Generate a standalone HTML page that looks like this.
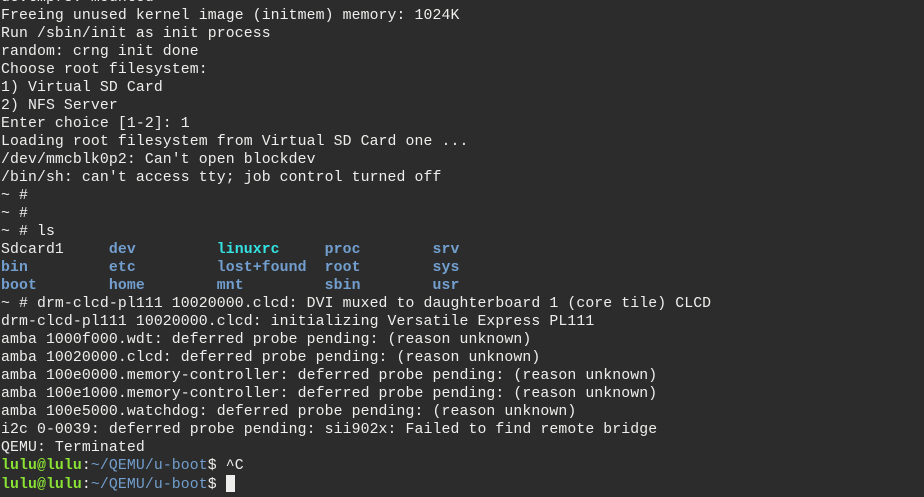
<!DOCTYPE html>
<html><head><meta charset="utf-8"><style>
html,body{margin:0;padding:0;background:#2c2c2c;width:924px;height:497px;overflow:hidden}
pre{margin:0;position:absolute;left:1px;top:-11px;font-family:"Liberation Mono",monospace;font-size:14.8px;letter-spacing:0.11px;line-height:18px;color:#eeeeec;white-space:pre}
.b{color:#729fcf;font-weight:bold}
.c{color:#34e2e2;font-weight:bold}
.g{color:#8ae234;font-weight:bold}
.p{color:#729fcf}
.cur{display:inline-block;width:9px;height:17px;background:#eeeeec;vertical-align:-4px}
</style></head><body><pre>devtmpfs: mounted
Freeing unused kernel image (initmem) memory: 1024K
Run /sbin/init as init process
random: crng init done
Choose root filesystem:
1) Virtual SD Card
2) NFS Server
Enter choice [1-2]: 1
Loading root filesystem from Virtual SD Card one ...
/dev/mmcblk0p2: Can't open blockdev
/bin/sh: can't access tty; job control turned off
~ #
~ #
~ # ls
Sdcard1     <span class="b">dev</span>         <span class="c">linuxrc</span>     <span class="b">proc</span>        <span class="b">srv</span>
<span class="b">bin</span>         <span class="b">etc</span>         <span class="b">lost+found</span>  <span class="b">root</span>        <span class="b">sys</span>
<span class="b">boot</span>        <span class="b">home</span>        <span class="b">mnt</span>         <span class="b">sbin</span>        <span class="b">usr</span>
~ # drm-clcd-pl111 10020000.clcd: DVI muxed to daughterboard 1 (core tile) CLCD
drm-clcd-pl111 10020000.clcd: initializing Versatile Express PL111
amba 1000f000.wdt: deferred probe pending: (reason unknown)
amba 10020000.clcd: deferred probe pending: (reason unknown)
amba 100e0000.memory-controller: deferred probe pending: (reason unknown)
amba 100e1000.memory-controller: deferred probe pending: (reason unknown)
amba 100e5000.watchdog: deferred probe pending: (reason unknown)
i2c 0-0039: deferred probe pending: sii902x: Failed to find remote bridge
QEMU: Terminated
<span class="g">lulu@lulu</span>:<span class="p">~/QEMU/u-boot</span>$ ^C
<span class="g">lulu@lulu</span>:<span class="p">~/QEMU/u-boot</span>$ <span class="cur"></span></pre></body></html>
